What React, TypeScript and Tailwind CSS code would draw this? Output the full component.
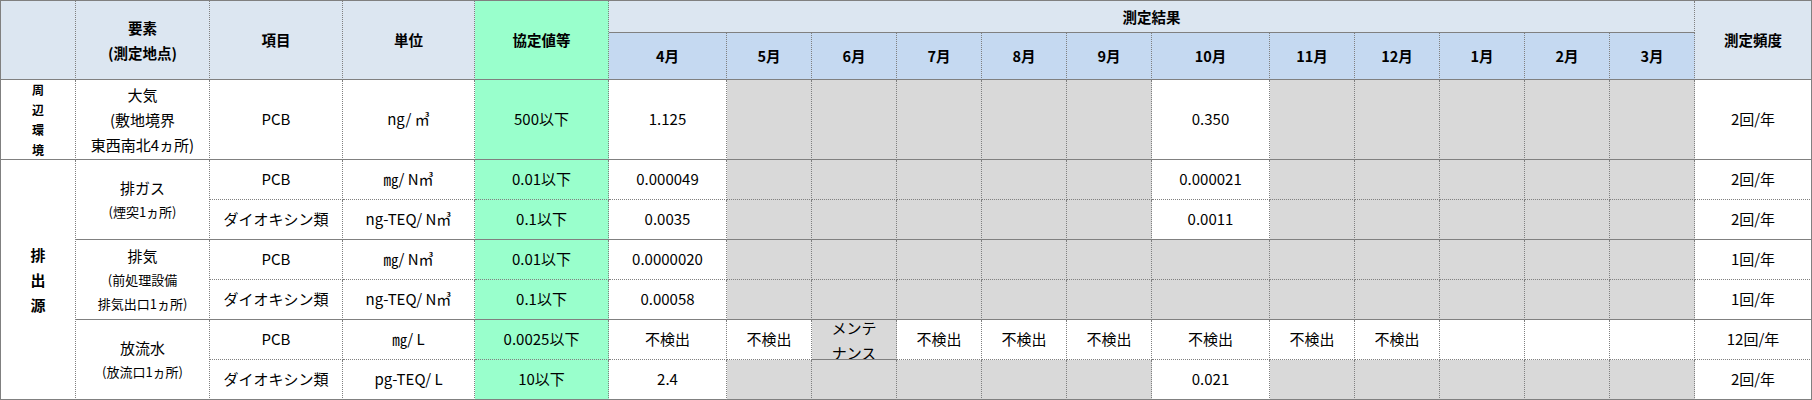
import React from 'react'

type MonthCell = {
  v?: string
  gray?: boolean
  lines?: string[]
  solidBottom?: boolean
}

type BodyRow = {
  item: string
  unit: string
  limit: string
  months: MonthCell[]
  freq: string
  dottedBottom?: boolean
}

const MONTHS = ['4月', '5月', '6月', '7月', '8月', '9月', '10月', '11月', '12月', '1月', '2月', '3月']

const g: MonthCell = { gray: true }
const grays = (n: number): MonthCell[] => Array.from({ length: n }, () => g)

// shared border pieces (all cells draw their own right / bottom edge)
const R_DOT = 'border-r [border-right-style:dotted]'
const R_SOLID = 'border-r'
const B_DOT = 'border-b [border-bottom-style:dotted]'
const B_SOLID = 'border-b'

function Cell({
  className = '',
  children,
}: {
  className?: string
  children?: React.ReactNode
}) {
  return (
    <div
      className={`flex flex-col items-center justify-center text-center border-[#808080] overflow-hidden ${className}`}
    >
      {children}
    </div>
  )
}

function MonthCells({ months, dottedBottom }: { months: MonthCell[]; dottedBottom?: boolean }) {
  return (
    <>
      {months.map((m, i) => {
        const bottom = m.solidBottom ? B_SOLID : dottedBottom ? B_DOT : B_SOLID
        const bg = m.gray ? 'bg-[#d9d9d9]' : 'bg-white'
        return (
          <Cell key={i} className={`${R_DOT} ${bottom} ${bg}`}>
            {m.lines ? (
              m.lines.map(l => (
                <span key={l} className="block leading-[25px] whitespace-nowrap">
                  {l}
                </span>
              ))
            ) : (
              <span className="whitespace-nowrap">{m.v ?? ''}</span>
            )}
          </Cell>
        )
      })}
    </>
  )
}

function RowTail({ row }: { row: BodyRow }) {
  const bottom = row.dottedBottom ? B_DOT : B_SOLID
  return (
    <>
      <Cell className={`${R_DOT} ${bottom} bg-white`}>{row.item}</Cell>
      <Cell className={`${R_DOT} ${bottom} bg-white`}>{row.unit}</Cell>
      <Cell className={`${R_DOT} ${bottom} bg-[#99ffcc]`}>{row.limit}</Cell>
      <MonthCells months={row.months} dottedBottom={row.dottedBottom} />
      <Cell className={`${R_SOLID} ${bottom} bg-white`}>{row.freq}</Cell>
    </>
  )
}

const airRow: BodyRow = {
  item: 'PCB',
  unit: 'ng/ ㎥',
  limit: '500以下',
  months: [{ v: '1.125' }, ...grays(5), { v: '0.350' }, ...grays(5)],
  freq: '2回/年',
}

const exhaustGas: BodyRow[] = [
  {
    item: 'PCB',
    unit: '㎎/ N㎥',
    limit: '0.01以下',
    months: [{ v: '0.000049' }, ...grays(5), { v: '0.000021' }, ...grays(5)],
    freq: '2回/年',
    dottedBottom: true,
  },
  {
    item: 'ダイオキシン類',
    unit: 'ng-TEQ/ N㎥',
    limit: '0.1以下',
    months: [{ v: '0.0035' }, ...grays(5), { v: '0.0011' }, ...grays(5)],
    freq: '2回/年',
  },
]

const exhaustAir: BodyRow[] = [
  {
    item: 'PCB',
    unit: '㎎/ N㎥',
    limit: '0.01以下',
    months: [{ v: '0.0000020' }, ...grays(11)],
    freq: '1回/年',
    dottedBottom: true,
  },
  {
    item: 'ダイオキシン類',
    unit: 'ng-TEQ/ N㎥',
    limit: '0.1以下',
    months: [{ v: '0.00058' }, ...grays(11)],
    freq: '1回/年',
  },
]

const ND: MonthCell = { v: '不検出' }

const effluent: BodyRow[] = [
  {
    item: 'PCB',
    unit: '㎎/ L',
    limit: '0.0025以下',
    months: [
      ND,
      ND,
      { gray: true, lines: ['メンテ', 'ナンス'], solidBottom: true },
      ND,
      ND,
      ND,
      ND,
      ND,
      ND,
      {},
      {},
      {},
    ],
    freq: '12回/年',
    dottedBottom: true,
  },
  {
    item: 'ダイオキシン類',
    unit: 'pg-TEQ/ L',
    limit: '10以下',
    months: [{ v: '2.4' }, ...grays(5), { v: '0.021' }, ...grays(5)],
    freq: '2回/年',
  },
]

function Lines({ lines, className = '' }: { lines: { t: string; cls?: string }[]; className?: string }) {
  return (
    <>
      {lines.map(l => (
        <span key={l.t} className={`block whitespace-nowrap ${className} ${l.cls ?? ''}`}>
          {l.t}
        </span>
      ))}
    </>
  )
}

export default function App() {
  const head = 'bg-[#dce6f1] font-bold text-[14.5px]'

  return (
    <div className="bg-white w-[1812px] h-[400px] font-['Noto_Sans_CJK_JP','Noto_Sans_CJK_SC',sans-serif] text-[15px] text-black">
      <div className="grid w-fit border-l border-t border-[#808080] grid-cols-[75px_134px_133px_132px_134px_118px_repeat(5,85px)_118px_repeat(5,85px)_117px] grid-rows-[32px_47px_80px_repeat(6,40px)]">
        {/* header */}
        <Cell className={`row-span-2 ${R_DOT} ${B_SOLID} ${head}`} />
        <Cell className={`row-span-2 ${R_DOT} ${B_SOLID} ${head}`}>
          <Lines lines={[{ t: '要素' }, { t: '(測定地点)' }]} className="leading-[25px]" />
        </Cell>
        <Cell className={`row-span-2 ${R_DOT} ${B_SOLID} ${head}`}>項目</Cell>
        <Cell className={`row-span-2 ${R_DOT} ${B_SOLID} ${head}`}>単位</Cell>
        <Cell className={`row-span-2 ${R_DOT} ${B_SOLID} bg-[#99ffcc] font-bold text-[14.5px]`}>
          協定値等
        </Cell>
        <Cell className={`col-span-12 ${R_DOT} ${B_SOLID} ${head}`}>測定結果</Cell>
        <Cell className={`row-span-2 ${R_SOLID} ${B_SOLID} ${head}`}>測定頻度</Cell>
        {MONTHS.map(m => (
          <Cell key={m} className={`${R_DOT} ${B_SOLID} bg-[#c5d9f1] font-bold text-[14.5px]`}>
            {m}
          </Cell>
        ))}

        {/* 周辺環境 */}
        <Cell className={`${R_DOT} ${B_SOLID} bg-white font-bold text-[12px]`}>
          <Lines lines={[{ t: '周' }, { t: '辺' }, { t: '環' }, { t: '境' }]} className="leading-[20px]" />
        </Cell>
        <Cell className={`${R_DOT} ${B_SOLID} bg-white`}>
          <Lines
            lines={[{ t: '大気' }, { t: '(敷地境界' }, { t: '東西南北4ヵ所)' }]}
            className="leading-[25px]"
          />
        </Cell>
        <RowTail row={airRow} />

        {/* 排出源 */}
        <Cell className={`row-span-6 ${R_DOT} ${B_SOLID} bg-white font-bold text-[15px]`}>
          <Lines lines={[{ t: '排' }, { t: '出' }, { t: '源' }]} className="leading-[25px]" />
        </Cell>
        <Cell className={`row-span-2 ${R_DOT} ${B_SOLID} bg-white`}>
          <Lines
            lines={[{ t: '排ガス' }, { t: '(煙突1ヵ所)', cls: 'text-[13px]' }]}
            className="leading-[24px]"
          />
        </Cell>
        <RowTail row={exhaustGas[0]} />
        <RowTail row={exhaustGas[1]} />

        <Cell className={`row-span-2 ${R_DOT} ${B_SOLID} bg-white`}>
          <Lines
            lines={[
              { t: '排気' },
              { t: '(前処理設備', cls: 'text-[13px]' },
              { t: '排気出口1ヵ所)', cls: 'text-[13px]' },
            ]}
            className="leading-[24px]"
          />
        </Cell>
        <RowTail row={exhaustAir[0]} />
        <RowTail row={exhaustAir[1]} />

        <Cell className={`row-span-2 ${R_DOT} ${B_SOLID} bg-white`}>
          <Lines
            lines={[{ t: '放流水' }, { t: '(放流口1ヵ所)', cls: 'text-[13px]' }]}
            className="leading-[24px]"
          />
        </Cell>
        <RowTail row={effluent[0]} />
        <RowTail row={effluent[1]} />
      </div>
    </div>
  )
}
